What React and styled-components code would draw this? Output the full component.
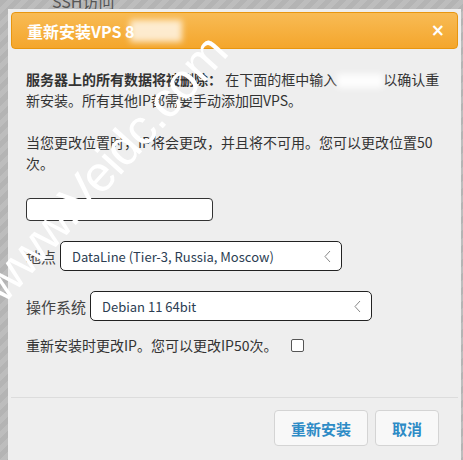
import React from "react";
import styled, { createGlobalStyle } from "styled-components";

const GlobalStyle = createGlobalStyle`
  html, body {
    margin: 0;
    padding: 0;
  }
  body {
    font-family: "Noto Sans CJK SC", "Noto Sans", sans-serif;
    color: #333;
  }
`;

const Page = styled.div`
  position: relative;
  width: 463px;
  height: 460px;
  overflow: hidden;
  background: repeating-linear-gradient(
    135deg,
    #b4b4b4 0px,
    #b4b4b4 5px,
    #bdbdbd 5px,
    #bdbdbd 10px
  );
`;

const BackdropText = styled.div`
  padding: 0 0 0 52px;
  margin-top: -9px;
  font-size: 16px;
  color: #555;
  line-height: 20px;
`;

const Dialog = styled.div`
  position: absolute;
  top: 9px;
  left: 8px;
  right: 2px;
  bottom: 0;
  background: #eeeeee;
  padding: 3px;
  display: flex;
  flex-direction: column;
`;

const Header = styled.div`
  height: 35px;
  display: flex;
  align-items: center;
  justify-content: space-between;
  padding: 0 12px 0 15px;
  border: 1px solid #e8960f;
  border-radius: 4px;
  background: linear-gradient(#f8bb55, #f4a62c);
  color: #fff;
`;

const Title = styled.div`
  font-size: 16px;
  font-weight: 700;
  display: flex;
  align-items: center;
`;

const Blur = styled.span`
  display: inline-block;
  width: ${({ w }) => w}px;
  height: ${({ h }) => h}px;
  background: ${({ bg }) => bg};
  filter: blur(3px);
  vertical-align: middle;
  margin-left: ${({ ml }) => ml || 0}px;
`;

const Close = styled.span`
  font-family: "DejaVu Sans", sans-serif;
  font-size: 17px;
  font-weight: 700;
  line-height: 1;
`;

const Body = styled.div`
  padding: 20px 15px 0 15px;
  font-size: 14px;
  line-height: 21px;
  flex: 1;
`;

const Para = styled.p`
  margin: 0 0 21px 0;
  width: 420px;
`;

const Strong = styled.b`
  font-weight: 700;
`;

const TextInput = styled.div`
  width: 185px;
  height: 21px;
  border: 1px solid #333;
  border-radius: 4px;
  background: #fff;
  margin-top: 24px;
`;

const FieldRow = styled.div`
  display: flex;
  align-items: center;
  gap: 4px;
  margin-top: ${({ mt }) => mt}px;
`;

const Label = styled.span`
  font-size: 15px;
  color: #444;
`;

const Select = styled.div`
  width: ${({ w }) => w}px;
  height: 28px;
  box-sizing: content-box;
  border: 1px solid #222;
  border-radius: 5px;
  background: #fff;
  display: flex;
  align-items: center;
  justify-content: space-between;
  padding: 0 10px 0 11px;
  font-size: 13px;
  color: #2b3d52;
`;

const CheckRow = styled.div`
  display: flex;
  align-items: center;
  margin-top: 14px;
  gap: 14px;
`;

const Check = styled.span`
  width: 11px;
  height: 11px;
  border: 1px solid #555;
  border-radius: 2px;
  background: #fff;
`;

const Footer = styled.div`
  border-top: 1px solid #dcdcdc;
  display: flex;
  justify-content: flex-end;
  gap: 7px;
  padding: 12px 19px 11px 0;
  margin-top: auto;
`;

const Button = styled.button`
  height: 36px;
  padding: 0 ${({ px }) => px}px;
  border: 1px solid #d4d4d4;
  border-radius: 4px;
  background: #f8f8f8;
  color: #2d8bc6;
  font-family: inherit;
  font-size: 15px;
  font-weight: 700;
`;

const Watermark = styled.div`
  position: absolute;
  left: 10px;
  bottom: 150px;
  transform-origin: 0 100%;
  transform: rotate(-48deg);
  font-family: "Liberation Sans", sans-serif;
  font-size: 50px;
  line-height: 1;
  letter-spacing: -1px;
  color: #fff;
  white-space: nowrap;
  pointer-events: none;
`;

const Chevron = () => (
  <svg width="7" height="13" viewBox="0 0 7 13">
    <path d="M6 1 L1 6.5 L6 12" fill="none" stroke="#888" strokeWidth="1" />
  </svg>
);

export default function App() {
  return (
    <Page>
      <GlobalStyle />
      <BackdropText>SSH访问</BackdropText>
      <Dialog>
        <Header>
          <Title>
            重新安装VPS 8
            <Blur w={52} h={22} bg="rgba(255,255,255,0.75)" ml={-4} />
          </Title>
          <Close>×</Close>
        </Header>
        <Body>
          <Para>
            <Strong>服务器上的所有数据将被删除：</Strong> 在下面的框中输入
            <Blur w={46} h={14} bg="rgba(255,255,255,0.9)" />
            以确认重新安装。所有其他IP都需要手动添加回VPS。
          </Para>
          <Para>
            当您更改位置时，IP将会更改，并且将不可用。您可以更改位置50次。
          </Para>
          <TextInput />
          <FieldRow mt={20}>
            <Label>地点</Label>
            <Select w={259}>
              DataLine (Tier-3, Russia, Moscow)
              <Chevron />
            </Select>
          </FieldRow>
          <FieldRow mt={20}>
            <Label>操作系统</Label>
            <Select w={259}>
              Debian 11 64bit
              <Chevron />
            </Select>
          </FieldRow>
          <CheckRow>
            <span>重新安装时更改IP。您可以更改IP50次。</span>
            <Check />
          </CheckRow>
        </Body>
        <Footer>
          <Button px={16}>重新安装</Button>
          <Button px={16}>取消</Button>
        </Footer>
      </Dialog>
      <Watermark>www.Veidc.com</Watermark>
    </Page>
  );
}
